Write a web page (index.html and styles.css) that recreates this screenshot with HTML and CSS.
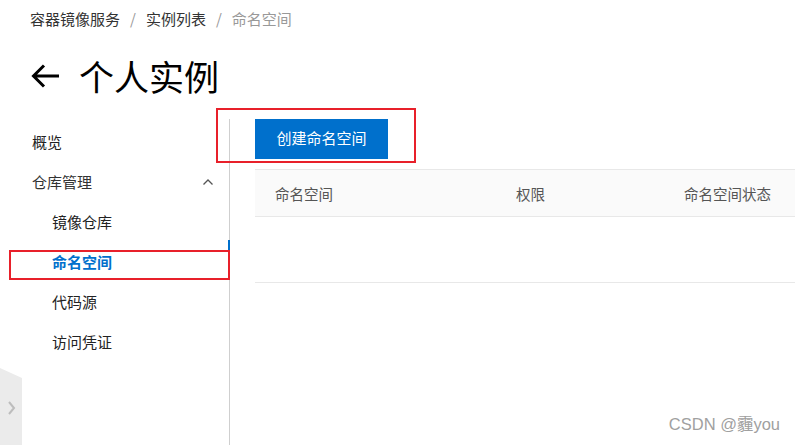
FILE: index.html
```html
<!DOCTYPE html>
<html lang="zh-CN">
<head>
<meta charset="utf-8">
<title>命名空间</title>
<link rel="stylesheet" href="styles.css">
</head>
<body>
<div class="page">
  <nav class="breadcrumb">
    <span class="crumb">容器镜像服务</span>
    <span class="sep">/</span>
    <span class="crumb">实例列表</span>
    <span class="sep">/</span>
    <span class="crumb current">命名空间</span>
  </nav>
  <header class="title">
    <svg class="back" width="30" height="26" viewBox="0 0 30 26">
      <path d="M29 13H4M14 2.5L3.5 13L14 23.5" fill="none" stroke="#000" stroke-width="3"/>
    </svg>
    <h1>个人实例</h1>
  </header>
  <div class="main">
    <aside class="sidebar">
      <div class="item">概览</div>
      <div class="item group">仓库管理
        <svg class="caret" width="10" height="6" viewBox="0 0 10 6"><path d="M0.5 5.5L5 1L9.5 5.5" fill="none" stroke="#555" stroke-width="1.3"/></svg>
      </div>
      <div class="item sub">镜像仓库</div>
      <div class="item sub active">命名空间</div>
      <div class="item sub">代码源</div>
      <div class="item sub">访问凭证</div>
      <span class="indicator"></span>
    </aside>
    <section class="content">
      <button class="primary">创建命名空间</button>
      <div class="table">
        <div class="thead">
          <div class="th">命名空间</div>
          <div class="th">权限</div>
          <div class="th">命名空间状态</div>
        </div>
        <div class="empty-row"></div>
      </div>
    </section>
  </div>

  <div class="mark mark-button"></div>
  <div class="mark mark-nav"></div>

  <div class="side-tab">
    <svg width="22" height="77" viewBox="0 0 22 77">
      <polygon points="0,0 22,10 22,77 0,77" fill="#ebebeb"/>
      <path d="M9 34L14 40L9 46" fill="none" stroke="#bdbdbd" stroke-width="2"/>
    </svg>
  </div>
  <div class="watermark">CSDN @霾you</div>
</div>
</body>
</html>
```

FILE: styles.css
```css
* { box-sizing: border-box; }
html, body { margin: 0; padding: 0; background: #fff; }
body {
  font-family: "Microsoft YaHei", "Noto Sans CJK SC", "Noto Sans", sans-serif;
  color: #333;
  width: 795px;
  height: 445px;
  overflow: hidden;
}
.page { position: relative; width: 795px; height: 445px; overflow: hidden; }

.breadcrumb {
  display: flex;
  align-items: center;
  padding: 9px 0 0 30px;
  height: 29px;
  font-size: 15px;
  line-height: 20px;
}
.crumb { color: #333; }
.crumb.current { color: #999; }
.sep { color: #999; margin: 0 10px; }

.title {
  display: flex;
  align-items: center;
  height: 48px;
  margin-top: 23px;
  padding-left: 30px;
}
.back { display: block; margin-right: 19px; }
.title h1 {
  margin: 0;
  font-size: 35px;
  font-weight: normal;
  line-height: 48px;
  color: #000;
}

.main {
  display: flex;
  margin-top: 19px;
  height: 326px;
}
.sidebar {
  position: relative;
  width: 230px;
  flex: none;
  border-right: 1px solid #cfcfcf;
  padding-top: 3px;
}
.item {
  position: relative;
  height: 40px;
  line-height: 40px;
  font-size: 15px;
  color: #222;
  padding-left: 32px;
}
.item.sub { padding-left: 52px; }
.item.active { color: #0070cc; font-weight: bold; }
.item.group { color: #333; }
.caret { position: absolute; right: 16px; top: 17px; }
.indicator {
  position: absolute;
  right: -1px;
  top: 121px;
  width: 2px;
  height: 10px;
  background: #0070cc;
}

.content {
  flex: 1;
  padding-left: 25px;
  min-width: 0;
}
.primary {
  display: block;
  width: 133px;
  height: 40px;
  border: 0;
  background: #0070cc;
  color: #fff;
  font-family: inherit;
  font-size: 15px;
  line-height: 38px;
  padding: 0 0 2px;
  cursor: pointer;
}
.table { margin-top: 10px; width: 100%; }
.thead {
  display: grid;
  grid-template-columns: 241px 168px 1fr;
  height: 48px;
  align-items: center;
  background: #fafafa;
  border-top: 1px solid #e8e8e8;
  border-bottom: 1px solid #e8e8e8;
}
.th {
  padding-left: 20px;
  font-size: 14.5px;
  color: #555;
  white-space: nowrap;
}
.empty-row { height: 66px; border-bottom: 1px solid #e8e8e8; }

.mark {
  position: absolute;
  border: 2px solid #e8202a;
  pointer-events: none;
}
.mark-button { left: 216px; top: 108px; width: 200px; height: 55px; }
.mark-nav { left: 9px; top: 250px; width: 221px; height: 30px; }

.side-tab { position: absolute; left: 0; top: 368px; line-height: 0; }

.watermark {
  position: absolute;
  right: 15px;
  bottom: 10px;
  font-family: "Liberation Sans", "Noto Sans CJK SC", sans-serif;
  font-size: 16.5px;
  color: #a0a0a0;
  text-shadow: 0 0 1px #fff;
}
```
